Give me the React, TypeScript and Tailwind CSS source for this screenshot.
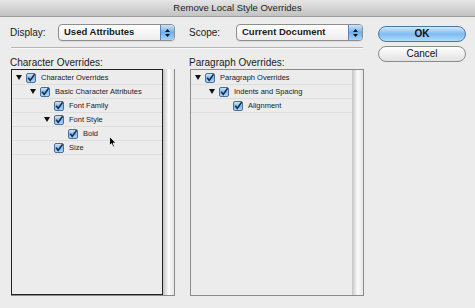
import React from 'react';

type Node = { label: string; depth: 0 | 1 | 2 | 3; open?: boolean };

const charRows: Node[] = [
  { label: 'Character Overrides', depth: 0, open: true },
  { label: 'Basic Character Attributes', depth: 1, open: true },
  { label: 'Font Family', depth: 2 },
  { label: 'Font Style', depth: 2, open: true },
  { label: 'Bold', depth: 3 },
  { label: 'Size', depth: 2 },
];

const paraRows: Node[] = [
  { label: 'Paragraph Overrides', depth: 0, open: true },
  { label: 'Indents and Spacing', depth: 1, open: true },
  { label: 'Alignment', depth: 2 },
];

const indent = ['pl-[4px]', 'pl-[18px]', 'pl-[32px]', 'pl-[46px]'];

function Check() {
  return (
    <svg width="10" height="10" viewBox="0 0 10 10" className="shrink-0">
      <defs>
        <linearGradient id="cb" x1="0" y1="0" x2="0" y2="1">
          <stop offset="0" stopColor="#d7ecfc" />
          <stop offset="0.5" stopColor="#7db8ec" />
          <stop offset="1" stopColor="#b6dcfb" />
        </linearGradient>
      </defs>
      <rect x="0.5" y="0.5" width="9" height="9" rx="1.5" fill="url(#cb)" stroke="#4a6f99" />
      <path d="M2.2 4.8 L4.2 7.4 L8.6 1.2" fill="none" stroke="#1b2a44" strokeWidth="1.5" />
    </svg>
  );
}

function Disclosure() {
  return (
    <svg width="6" height="5" viewBox="0 0 6 5" className="shrink-0">
      <path d="M0 0 H6 L3 5 Z" fill="#111" />
    </svg>
  );
}

function TreeRow({ node }: { node: Node }) {
  return (
    <div className={`flex h-[14px] items-center border-b border-[#dedede] ${indent[node.depth]}`}>
      <span className="flex w-[6px] shrink-0 items-center">{node.open ? <Disclosure /> : null}</span>
      <span className="ml-[4px] flex">
        <Check />
      </span>
      <span className="ml-[5px] whitespace-nowrap text-[7.5px] leading-none text-[#1a1a1a]">{node.label}</span>
    </div>
  );
}

function Scrollbar() {
  return <div className="w-[11px] shrink-0 bg-gradient-to-r from-[#c4c4c4] via-[#fbfbfb] to-[#e6e6e6]" />;
}

function Popup({ value, width }: { value: string; width: string }) {
  return (
    <div className={`flex h-[17px] ${width} items-stretch overflow-hidden rounded-[4px] border border-[#8d8d8d] bg-gradient-to-b from-white to-[#ededed] shadow-[0_1px_0_rgba(0,0,0,0.08)]`}>
      <span className="flex flex-1 items-center pl-[5px] text-[9.5px] font-bold text-[#1a1a1a]">{value}</span>
      <span className="flex w-[14px] flex-col items-center justify-center gap-[2px] border-l border-[#5d86b5] bg-gradient-to-b from-[#c9e4fb] via-[#6fb0ea] to-[#a6d3f9]">
        <svg width="5" height="3" viewBox="0 0 5 3">
          <path d="M0 3 L2.5 0 L5 3 Z" fill="#111" />
        </svg>
        <svg width="5" height="3" viewBox="0 0 5 3">
          <path d="M0 0 L2.5 3 L5 0 Z" fill="#111" />
        </svg>
      </span>
    </div>
  );
}

export default function App() {
  return (
    <div className="h-[308px] w-[475px] overflow-hidden bg-[#ececec] font-['Liberation_Sans',Arial,sans-serif] text-[#1a1a1a]">
      <div className="flex h-[17px] items-center justify-center border-b border-[#9c9c9c] bg-gradient-to-b from-[#e6e6e6] to-[#c2c2c2] text-[9.5px] text-[#222]">
        Remove Local Style Overrides
      </div>

      <div className="flex gap-[14px] pl-[10px] pt-[7px]">
        <div className="flex w-[354px] flex-col">
          <div className="flex h-[17px] items-center">
            <span className="w-[48px] text-[10px]">Display:</span>
            <Popup value="Used Attributes" width="w-[117px]" />
            <span className="ml-[14px] w-[47px] text-[10px]">Scope:</span>
            <Popup value="Current Document" width="w-[127px]" />
          </div>

          <div className="ml-[1px] mt-[6px] h-px w-[352px] bg-[#b4b4b4]" />
          <div className="ml-[1px] h-px w-[352px] bg-[#f8f8f8]" />

          <div className="mt-[8px] flex gap-[14px]">
            <div className="flex w-[165px] flex-col">
              <div className="h-[12px] text-[10px] leading-[12px]">Character Overrides:</div>
              <div className="ml-[1px] flex h-[227px] border-b border-r border-[#8a8a8a]">
                <div className="relative flex-1 border border-[#222] pt-[1px]">
                  {charRows.map((n) => (
                    <TreeRow key={n.label} node={n} />
                  ))}
                  <svg width="8" height="12" viewBox="0 0 8 12" className="absolute left-[97px] top-[66px]">
                    <path d="M0.5 0.5 V9.5 L2.6 7.6 L4 11 L5.5 10.4 L4.1 7.1 H7 Z" fill="#000" stroke="#fff" strokeWidth="0.8" />
                  </svg>
                </div>
                <Scrollbar />
              </div>
            </div>

            <div className="flex w-[175px] flex-col">
              <div className="h-[12px] text-[10px] leading-[12px]">Paragraph Overrides:</div>
              <div className="ml-[1px] flex h-[227px] border border-[#8a8a8a]">
                <div className="flex-1 pt-[1px]">
                  {paraRows.map((n) => (
                    <TreeRow key={n.label} node={n} />
                  ))}
                </div>
                <Scrollbar />
              </div>
            </div>
          </div>
        </div>

        <div className="flex w-[88px] flex-col gap-[4px] pt-[2px]">
          <button className="h-[16px] rounded-full border border-[#4f76a3] bg-gradient-to-b from-[#d2e9fc] via-[#7cbcf1] to-[#b3dbfb] text-[10px] font-bold leading-none text-[#111]">
            OK
          </button>
          <button className="h-[16px] rounded-full border border-[#8a8a8a] bg-gradient-to-b from-white via-[#f0f0f0] to-[#e2e2e2] text-[10px] leading-none text-[#111]">
            Cancel
          </button>
        </div>
      </div>
    </div>
  );
}
